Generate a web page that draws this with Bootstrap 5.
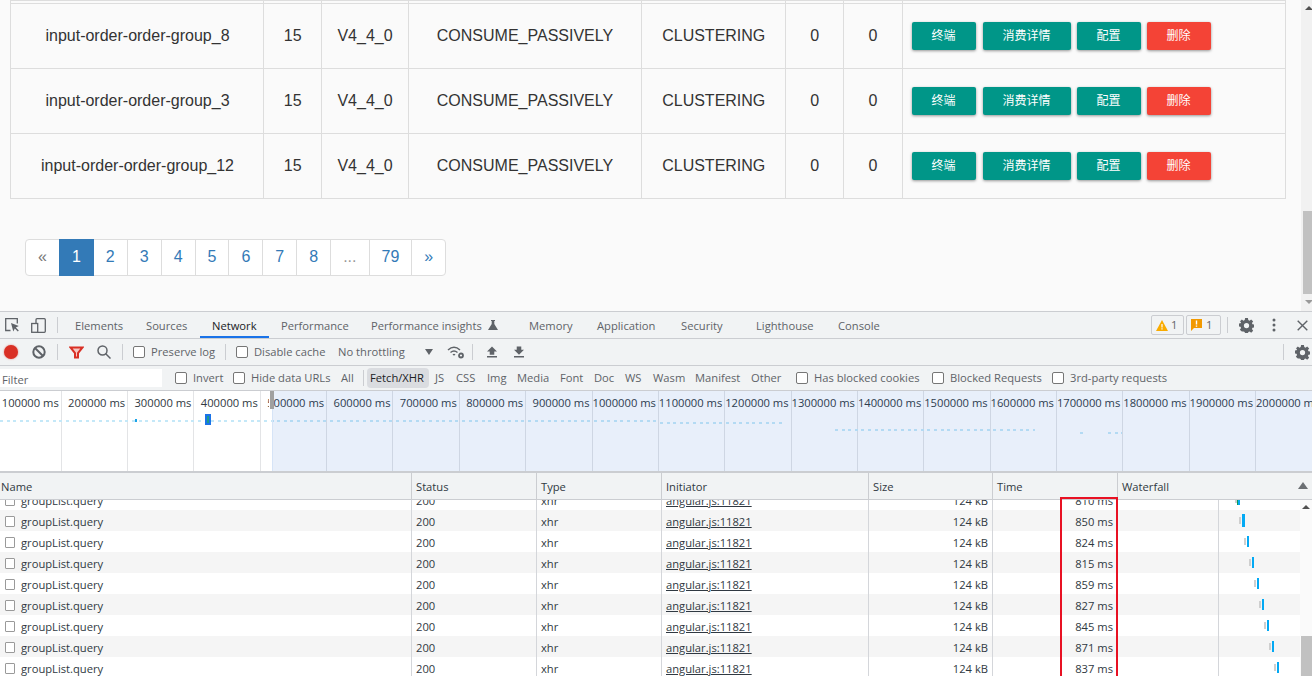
<!DOCTYPE html>
<html lang="zh"><head><meta charset="utf-8">
<link href="https://cdn.jsdelivr.net/npm/bootstrap@5.3.0/dist/css/bootstrap.min.css" rel="stylesheet">
<style>
html,body{height:676px;overflow:hidden}
body{background:#fafafa;font-family:"Liberation Sans","Noto Sans CJK SC",sans-serif;color:#333}
.top-pane{height:311px;overflow:hidden}
.page-main{width:1301px;padding-left:10px}
.grp-table{table-layout:fixed;width:1276px;margin:0;--bs-table-bg:transparent;--bs-table-border-color:#ddd;color:#333;font-size:16px;border-color:#ddd;border-collapse:collapse}
.grp-table td{height:65px;padding:0 0 0 1px;text-align:center;vertical-align:middle;color:#333;border:1px solid #ddd}
.grp-table tr.stub td{height:3px;border-top:0}
.grp-table td.op-cell{padding-left:9px}
.op-row{gap:6px}
.op-row .op-btn:first-child{margin-right:1px}
.op-btn{height:28px;padding:1px 20px 0;border:0;border-radius:2px;background:#009688;color:#fff;font-size:12px;line-height:27px;box-shadow:0 1px 3px rgba(0,0,0,.4)}
.op-btn.danger{background:#f44336}
.pager{margin:40px 0 0 15px}
.pager .page-link{padding:6px 12px;font-size:16px;line-height:22.86px;color:#337ab7;background:#fff;border:1px solid #ddd;margin-left:-1px}
.pager .page-item:first-child .page-link{margin-left:0;color:#777;border-radius:4px 0 0 4px}
.pager .page-item:last-child .page-link{border-radius:0 4px 4px 0}
.pager .page-item.active .page-link{background:#337ab7;border-color:#337ab7;color:#fff}
.pager .page-item.off .page-link{color:#999}
.vbar{width:11px;background:#f1f1f1;position:relative;overflow:hidden}
.vbar .thumb{position:absolute;left:2px;right:0;top:211px;height:83px;background:#c1c1c1}
.vbar .up{position:absolute;left:4px;top:6px;border:4px solid transparent;border-top:0;border-bottom:4px solid #505050}
.vbar .down{position:absolute;left:4px;top:300px;border:4px solid transparent;border-bottom:0;border-top:4px solid #999}

.devtools{font-family:"Open Sans","Noto Sans",sans-serif;font-size:11.2px;color:#303942;background:#f1f3f4;border-top:1px solid #cbcdd1}
.dt-bar{height:27px;border-bottom:1px solid #cbcdd1;white-space:nowrap;position:relative}
.dt-bar>*{flex:none}
.tab{height:26px;line-height:27px;padding-left:12px;color:#5f6368}
.tab.on{color:#202124;border-bottom:2px solid #1a73e8}
.ico{display:block}
.sep{width:1px;height:16px;background:#cbcdd1}
.chk{width:12px;height:12px;border:1px solid #767676;border-radius:2px;background:#fff;display:inline-block;flex:none}
.lbl{color:#5f6368;padding-top:1px}
.item{display:flex;align-items:center;gap:6px}
.badge-box{height:20px;border:1px solid #cbcdd1;border-radius:2px;display:flex;align-items:center;gap:3px;padding:0 4px;color:#5f6368}
.filter-box{width:162px;height:18px;background:#fff;padding-left:2px;line-height:21px;color:#5f6368}
.pill{background:#dadce0;border-radius:4px;padding:0 3px;height:20px;line-height:20px;color:#202124}
.dt-bar.f3{height:25px}
.rec{width:14px;height:14px;border-radius:50%;background:#d93025;margin-left:4px;box-shadow:0 0 2px rgba(217,48,37,.6)}

.overview{height:82px;background:#fff;position:relative;border-bottom:2px solid #cbcdd1;overflow:hidden}
.ov-row{margin-left:-4.6px}
.ov-cell{flex:none;width:66.35px;height:80px;border-right:1px solid #e3e4e6;text-align:right;padding:4px 2px 0 0;white-space:nowrap;color:#303942;font-size:11.2px}
.ov-sel{position:absolute;left:272px;top:0;right:0;bottom:0;background:rgba(26,100,210,.1);border-left:1px solid #d6e4f7}
.ov-handle{position:absolute;left:270px;top:0;width:4px;height:18px;background:#a0a0a0}
.ov-mask{position:absolute;left:269px;top:0;width:3px;height:22px;background:#fff}
.dots{position:absolute;height:2px;background:repeating-linear-gradient(90deg,#c4e8f8 0 3px,transparent 3px 6.6px)}
.d1{left:0;width:658px;top:29px}
.d2{left:660px;width:125px;top:31px}
.d3{left:835px;width:200px;top:38px}
.d4{left:1080px;width:3px;top:41px}
.d5{left:1108px;width:14px;top:41px}
.ov-mark{position:absolute;left:205px;top:23px;width:6px;height:11px;background:#1a73e8}
.ov-mark::after{content:"";position:absolute;left:2px;top:2px;width:2px;height:7px;background:#1c9a8e}
.ov-dot{position:absolute;left:135px;top:28px;width:2px;height:3px;background:#1aa3e8}

.net-head{height:27px;border-bottom:1px solid #cbcdd1}
.c{flex:none;padding:0 4px;white-space:nowrap;overflow:hidden;height:100%;line-height:23px;border-left:1px solid #d4d6da}
.net-head .c{line-height:27px;border-left-color:#cbcdd1;position:relative}
.c:first-child{border-left:0}
.cn{width:411px}.cs{width:125px}.ct{width:125px}.ci{width:207px}.cz{width:124px}.cm{width:125px}
.cw{flex:none;width:183px}
.net-head .cn{padding-left:1px}
.net-body{height:177px;overflow:hidden;background:#fff;position:relative}
.rows{margin-top:-11px}
.net-row{height:21px;background:#fff;color:#303942}
.net-row:nth-child(even){background:#f5f5f5}
.cn.row-name{padding:2px 0 0 5px;display:flex;align-items:center;gap:6px}
.row-chk{width:10px;height:11px;border:1px solid #9a9a9a;border-radius:1px;background:#fff;flex:none}
.r{text-align:right}
.u{text-decoration:underline}
.cw{position:relative;height:100%;border-left:1px solid #d4d6da}
.wf-inner{position:absolute;left:100px;top:0;bottom:0;width:1px;background:#d4d6da}
.bar-q{position:absolute;top:7px;height:7px;width:2px;background:#cfcfcf}
.bar-b{position:absolute;top:5px;height:11px;width:2px;background:#03a9f4}
.bar-b.wide{top:4px;height:13px;width:3px}
.bar-b.green{background:#0d9d58}
.net-sb{position:absolute;right:0;top:0;bottom:0;width:12px;background:#fafafa}
.net-sb .up{position:absolute;left:2px;top:5px;border:4px solid transparent;border-top:0;border-bottom:4px solid #505050}
.net-sb .thumb{position:absolute;left:1px;right:0;top:136px;bottom:0;background:#c1c1c1}
.red-box{position:absolute;left:1060px;top:497px;width:58px;height:182px;border:2px solid #e81123;pointer-events:none}
.sort-up{position:absolute;left:1298px;top:9px;border:5px solid transparent;border-top:0;border-bottom:7px solid #6b6f73}
</style></head>
<body>
<div class="top-pane d-flex">
 <div class="page-main">
  <table class="grp-table table-bordered">
   <colgroup><col style="width:253px"><col style="width:57.5px"><col style="width:87px"><col style="width:233px"><col style="width:144.5px"><col style="width:57.5px"><col style="width:59px"><col></colgroup>
   <tr class="stub"><td></td><td></td><td></td><td></td><td></td><td></td><td></td><td></td></tr>
   <tr><td>input-order-order-group_8</td><td>15</td><td>V4_4_0</td><td>CONSUME_PASSIVELY</td><td>CLUSTERING</td><td>0</td><td>0</td><td class="op-cell text-start"><div class="d-flex op-row align-items-center"><button class="op-btn">终端</button><button class="op-btn">消费详情</button><button class="op-btn">配置</button><button class="op-btn danger">删除</button></div></td></tr>
   <tr><td>input-order-order-group_3</td><td>15</td><td>V4_4_0</td><td>CONSUME_PASSIVELY</td><td>CLUSTERING</td><td>0</td><td>0</td><td class="op-cell text-start"><div class="d-flex op-row align-items-center"><button class="op-btn">终端</button><button class="op-btn">消费详情</button><button class="op-btn">配置</button><button class="op-btn danger">删除</button></div></td></tr>
   <tr><td>input-order-order-group_12</td><td>15</td><td>V4_4_0</td><td>CONSUME_PASSIVELY</td><td>CLUSTERING</td><td>0</td><td>0</td><td class="op-cell text-start"><div class="d-flex op-row align-items-center"><button class="op-btn">终端</button><button class="op-btn">消费详情</button><button class="op-btn">配置</button><button class="op-btn danger">删除</button></div></td></tr>
  </table>
  <ul class="pagination pager">
   <li class="page-item"><a class="page-link" href="#">«</a></li>
   <li class="page-item active"><a class="page-link" href="#">1</a></li>
   <li class="page-item"><a class="page-link" href="#">2</a></li>
   <li class="page-item"><a class="page-link" href="#">3</a></li>
   <li class="page-item"><a class="page-link" href="#">4</a></li>
   <li class="page-item"><a class="page-link" href="#">5</a></li>
   <li class="page-item"><a class="page-link" href="#">6</a></li>
   <li class="page-item"><a class="page-link" href="#">7</a></li>
   <li class="page-item"><a class="page-link" href="#">8</a></li>
   <li class="page-item off"><a class="page-link" href="#">...</a></li>
   <li class="page-item"><a class="page-link" href="#">79</a></li>
   <li class="page-item"><a class="page-link" href="#">»</a></li>
  </ul>
 </div>
 <div class="vbar ms-auto"><span class="up"></span><span class="thumb"></span><span class="down"></span></div>
</div>
<div class="devtools">
 <div class="dt-bar d-flex align-items-center" id="bar1">
  <svg class="ico" style="margin-left:5px" width="14" height="14" viewBox="0 0 14 14" fill="none" stroke="#5f6368" stroke-width="1.300"><path d="M5.500 12.500H.7V.7h11.600v4.800"/><path d="M6 5l2.300 8.500 1.500-3 3 3 1-1-3-3 3-1.500z" fill="#5f6368" stroke="none"/></svg>
  <svg class="ico" style="margin-left:12px" width="15" height="15" viewBox="0 0 15 15" fill="none" stroke="#5f6368" stroke-width="1.300"><rect x="5" y=".7" width="9.300" height="13.600" rx="1"/><rect x=".7" y="5.500" width="6" height="8.800" fill="#f1f3f4"/></svg>
  <span class="sep" style="margin-left:11px;margin-right:5px"></span>
  <span class="tab" style="width:71px">Elements</span>
  <span class="tab" style="width:66px">Sources</span>
  <span class="tab on" style="width:69px">Network</span>
  <span class="tab" style="width:90px">Performance</span>
  <span class="tab d-flex align-items-center gap-1" style="width:158px">Performance insights <svg style="margin-left:1px" width="12" height="12" viewBox="0 0 12 12" fill="#5f6368"><path d="M4 1h4v1H7.300v3L11 11H1l3.700-6V2H4z"/></svg></span>
  <span class="tab" style="width:68px">Memory</span>
  <span class="tab" style="width:84px">Application</span>
  <span class="tab" style="width:75px">Security</span>
  <span class="tab" style="width:82px">Lighthouse</span>
  <span class="tab" style="width:71px">Console</span>
  <div class="badge-box" style="margin-left:254px;width:33px"><svg width="12" height="11" viewBox="0 0 12 11"><path d="M6 0l6 11H0z" fill="#f9ab00"/><path d="M5.400 4h1.200v3.500H5.400zM5.400 8.300h1.200v1.200H5.400z" fill="#fff"/></svg>1</div>
  <div class="badge-box" style="margin-left:2px;width:35px"><svg width="12" height="12" viewBox="0 0 12 12"><path d="M0 0h11v9H3l-3 3z" fill="#f29900"/><path d="M4.800 1.500H6.200v4H4.800zM4.800 6.500H6.200v1.300H4.800z" fill="#fff"/></svg>1</div>
  <span class="sep" style="margin-left:6px"></span>
  <svg class="ico" style="margin-left:11px" width="15" height="15" viewBox="0 0 16 16"><path fill="#5f6368" fill-rule="evenodd" d="M6.500 0h3l.4 2.200 1.300.6L13 1.500l2.100 2.100-1.300 1.800.6 1.300 2.200.4v3l-2.200.4-.6 1.300 1.300 1.800-2.100 2.100-1.800-1.300-1.300.6-.4 2.200h-3l-.4-2.200-1.300-.6L3 14.500.9 12.400l1.300-1.800-.6-1.300L-.6 8.900v-3l2.200-.4.6-1.300L.9 3.600 3 1.500l1.800 1.300 1.300-.6zM8 5.200A2.800 2.800 0 1 0 8 10.800 2.800 2.800 0 0 0 8 5.200z"/></svg>
  <svg class="ico" style="margin-left:18px" width="4" height="14" viewBox="0 0 4 14" fill="#5f6368"><circle cx="2" cy="2" r="1.500"/><circle cx="2" cy="7" r="1.500"/><circle cx="2" cy="12" r="1.500"/></svg>
  <svg class="ico" style="margin-left:21px" width="11" height="11" viewBox="0 0 11 11" stroke="#5f6368" stroke-width="1.400"><path d="M.7.700l9.600 9.600M10.300.700L.7 10.300"/></svg>
 </div>
 <div class="dt-bar d-flex align-items-center" id="bar2">
  <span class="rec"></span>
  <svg class="ico" style="margin-left:14px" width="14" height="14" viewBox="0 0 14 14" fill="none" stroke="#5f6368" stroke-width="2"><circle cx="7" cy="7" r="5.700"/><path d="M3 3l8 8"/></svg>
  <span class="sep" style="margin-left:11px"></span>
  <svg class="ico" style="margin-left:11px" width="15" height="13" viewBox="0 0 15 13" fill="#f6c7c3" stroke="#d93025" stroke-width="2"><path d="M1.500 1.500h12L9 7v4.500H6V7z"/></svg>
  <svg class="ico" style="margin-left:13px" width="14" height="14" viewBox="0 0 14 14" fill="none" stroke="#5f6368" stroke-width="1.500"><circle cx="5.500" cy="5.500" r="4.500"/><path d="M8.500 8.500l5 5"/></svg>
  <span class="sep" style="margin-left:11px"></span>
  <div class="item" style="margin-left:10px;width:92px"><span class="chk"></span><span class="lbl">Preserve log</span></div>
  <span class="sep"></span>
  <div class="item" style="margin-left:10px;width:102px"><span class="chk"></span><span class="lbl">Disable cache</span></div>
  <span class="lbl" style="width:87px">No throttling</span>
  <span style="border:4px solid transparent;border-bottom:0;border-top:6px solid #5f6368"></span>
  <svg class="ico" style="margin-left:14px" width="17" height="13" viewBox="0 0 17 13" fill="none" stroke="#5f6368" stroke-width="1.500"><path d="M1 4c4-3.600 8-3.600 12 0M3.500 6.500c2.500-2 4.500-2 7 0M6 9c1-.8 1-.8 2 0"/><circle cx="14" cy="9.500" r="2" stroke-width="1.800"/></svg>
  <span class="sep" style="margin-left:8px"></span>
  <svg class="ico" style="margin-left:14px" width="10" height="12" viewBox="0 0 11 12" fill="#5f6368"><path d="M5.500 0L11 5.500H8V9H3V5.500H0zM0 10.500h11V12H0z"/></svg>
  <svg class="ico" style="margin-left:17px" width="10" height="12" viewBox="0 0 11 12" fill="#5f6368"><path d="M3 0h5v3.500h3L5.500 9 0 3.500h3zM0 10.500h11V12H0z"/></svg>
  <span class="sep" style="margin-left:759px"></span>
  <svg class="ico" style="margin-left:11px" width="15" height="15" viewBox="0 0 16 16"><path fill="#5f6368" fill-rule="evenodd" d="M6.500 0h3l.4 2.200 1.300.6L13 1.500l2.100 2.100-1.300 1.800.6 1.300 2.200.4v3l-2.200.4-.6 1.300 1.300 1.800-2.100 2.100-1.800-1.300-1.300.6-.4 2.200h-3l-.4-2.200-1.300-.6L3 14.500.9 12.400l1.300-1.800-.6-1.300L-.6 8.900v-3l2.200-.4.6-1.300L.9 3.600 3 1.500l1.800 1.300 1.300-.6zM8 5.200A2.800 2.800 0 1 0 8 10.800 2.800 2.800 0 0 0 8 5.200z"/></svg>
 </div>
 <div class="dt-bar f3 d-flex align-items-center" id="bar3">
  <div class="filter-box">Filter</div>
  <div class="item" style="margin-left:13px;width:58px"><span class="chk"></span><span class="lbl">Invert</span></div>
  <div class="item" style="width:108px"><span class="chk"></span><span class="lbl">Hide data URLs</span></div>
  <span class="lbl" style="width:22px">All</span>
  <span class="sep"></span>
  <span class="pill" style="margin-left:3px;width:62px">Fetch/XHR</span>
  <span class="lbl" style="margin-left:6px;width:21px">JS</span>
  <span class="lbl" style="width:31px">CSS</span>
  <span class="lbl" style="width:30px">Img</span>
  <span class="lbl" style="width:43px">Media</span>
  <span class="lbl" style="width:34px">Font</span>
  <span class="lbl" style="width:31px">Doc</span>
  <span class="lbl" style="width:28px">WS</span>
  <span class="lbl" style="width:42px">Wasm</span>
  <span class="lbl" style="width:56px">Manifest</span>
  <span class="lbl" style="width:45px">Other</span>
  <div class="item" style="width:136px"><span class="chk"></span><span class="lbl">Has blocked cookies</span></div>
  <div class="item" style="width:120px"><span class="chk"></span><span class="lbl">Blocked Requests</span></div>
  <div class="item"><span class="chk"></span><span class="lbl">3rd-party requests</span></div>
 </div>
 <div class="overview">
  <div class="d-flex ov-row">
   <div class="ov-cell">100000 ms</div><div class="ov-cell">200000 ms</div><div class="ov-cell">300000 ms</div><div class="ov-cell">400000 ms</div><div class="ov-cell">500000 ms</div><div class="ov-cell">600000 ms</div><div class="ov-cell">700000 ms</div><div class="ov-cell">800000 ms</div><div class="ov-cell">900000 ms</div><div class="ov-cell">1000000 ms</div><div class="ov-cell">1100000 ms</div><div class="ov-cell">1200000 ms</div><div class="ov-cell">1300000 ms</div><div class="ov-cell">1400000 ms</div><div class="ov-cell">1500000 ms</div><div class="ov-cell">1600000 ms</div><div class="ov-cell">1700000 ms</div><div class="ov-cell">1800000 ms</div><div class="ov-cell">1900000 ms</div><div class="ov-cell">2000000 ms</div>
  </div>
  <span class="ov-mask"></span><span class="dots d1"></span><span class="dots d2"></span><span class="dots d3"></span><span class="dots d4"></span><span class="dots d5"></span><span class="ov-dot"></span><span class="ov-mark"></span>
  <span class="ov-sel"></span><span class="ov-handle"></span>
 </div>
 <div class="net-head d-flex position-relative">
  <div class="c cn">Name</div><div class="c cs">Status</div><div class="c ct">Type</div><div class="c ci">Initiator</div><div class="c cz">Size</div><div class="c cm">Time</div><div class="c cw">Waterfall</div>
  <span class="sort-up"></span>
 </div>
 <div class="net-body">
  <div class="rows">
   <div class="net-row d-flex"><div class="c cn row-name"><span class="row-chk"></span>groupList.query</div><div class="c cs">200</div><div class="c ct">xhr</div><div class="c ci u">angular.js:11821</div><div class="c cz r">124 kB</div><div class="c cm r">810 ms</div><div class="cw"><span class="wf-inner"></span><span class="bar-q" style="left:117px"></span><span class="bar-b green" style="left:119px"></span><span class="bar-b" style="left:120px"></span></div></div>
   <div class="net-row d-flex"><div class="c cn row-name"><span class="row-chk"></span>groupList.query</div><div class="c cs">200</div><div class="c ct">xhr</div><div class="c ci u">angular.js:11821</div><div class="c cz r">124 kB</div><div class="c cm r">850 ms</div><div class="cw"><span class="wf-inner"></span><span class="bar-q" style="left:121px"></span><span class="bar-b wide" style="left:124px"></span></div></div>
   <div class="net-row d-flex"><div class="c cn row-name"><span class="row-chk"></span>groupList.query</div><div class="c cs">200</div><div class="c ct">xhr</div><div class="c ci u">angular.js:11821</div><div class="c cz r">124 kB</div><div class="c cm r">824 ms</div><div class="cw"><span class="wf-inner"></span><span class="bar-q" style="left:126px"></span><span class="bar-b" style="left:129px"></span></div></div>
   <div class="net-row d-flex"><div class="c cn row-name"><span class="row-chk"></span>groupList.query</div><div class="c cs">200</div><div class="c ct">xhr</div><div class="c ci u">angular.js:11821</div><div class="c cz r">124 kB</div><div class="c cm r">815 ms</div><div class="cw"><span class="wf-inner"></span><span class="bar-q" style="left:131px"></span><span class="bar-b" style="left:134px"></span></div></div>
   <div class="net-row d-flex"><div class="c cn row-name"><span class="row-chk"></span>groupList.query</div><div class="c cs">200</div><div class="c ct">xhr</div><div class="c ci u">angular.js:11821</div><div class="c cz r">124 kB</div><div class="c cm r">859 ms</div><div class="cw"><span class="wf-inner"></span><span class="bar-q" style="left:136px"></span><span class="bar-b" style="left:139px"></span></div></div>
   <div class="net-row d-flex"><div class="c cn row-name"><span class="row-chk"></span>groupList.query</div><div class="c cs">200</div><div class="c ct">xhr</div><div class="c ci u">angular.js:11821</div><div class="c cz r">124 kB</div><div class="c cm r">827 ms</div><div class="cw"><span class="wf-inner"></span><span class="bar-q" style="left:141px"></span><span class="bar-b" style="left:144px"></span></div></div>
   <div class="net-row d-flex"><div class="c cn row-name"><span class="row-chk"></span>groupList.query</div><div class="c cs">200</div><div class="c ct">xhr</div><div class="c ci u">angular.js:11821</div><div class="c cz r">124 kB</div><div class="c cm r">845 ms</div><div class="cw"><span class="wf-inner"></span><span class="bar-q" style="left:146px"></span><span class="bar-b" style="left:149px"></span></div></div>
   <div class="net-row d-flex"><div class="c cn row-name"><span class="row-chk"></span>groupList.query</div><div class="c cs">200</div><div class="c ct">xhr</div><div class="c ci u">angular.js:11821</div><div class="c cz r">124 kB</div><div class="c cm r">871 ms</div><div class="cw"><span class="wf-inner"></span><span class="bar-q" style="left:151px"></span><span class="bar-b" style="left:154px"></span></div></div>
   <div class="net-row d-flex"><div class="c cn row-name"><span class="row-chk"></span>groupList.query</div><div class="c cs">200</div><div class="c ct">xhr</div><div class="c ci u">angular.js:11821</div><div class="c cz r">124 kB</div><div class="c cm r">837 ms</div><div class="cw"><span class="wf-inner"></span><span class="bar-q" style="left:156px"></span><span class="bar-b" style="left:159px"></span></div></div>
  </div>
  <div class="net-sb"><span class="up"></span><span class="thumb"></span></div>
 </div>
</div>
<div class="red-box"></div>
<script src="https://cdn.jsdelivr.net/npm/bootstrap@5.3.0/dist/js/bootstrap.bundle.min.js"></script>
</body></html>
